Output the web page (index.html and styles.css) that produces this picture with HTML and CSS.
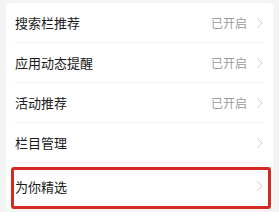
FILE: index.html
```html
<!DOCTYPE html>
<html lang="zh">
<head>
<meta charset="utf-8">
<link rel="stylesheet" href="styles.css">
</head>
<body>
<div class="card">
  <div class="row"><span class="label">搜索栏推荐</span><span class="value">已开启</span><svg class="chev" viewBox="0 0 7 12"><polyline points="1,1 6,6 1,11"/></svg></div>
  <div class="row"><span class="label">应用动态提醒</span><span class="value">已开启</span><svg class="chev" viewBox="0 0 7 12"><polyline points="1,1 6,6 1,11"/></svg></div>
  <div class="row"><span class="label">活动推荐</span><span class="value">已开启</span><svg class="chev" viewBox="0 0 7 12"><polyline points="1,1 6,6 1,11"/></svg></div>
  <div class="row"><span class="label">栏目管理</span><svg class="chev" viewBox="0 0 7 12"><polyline points="1,1 6,6 1,11"/></svg></div>
  <div class="row last"><span class="label">为你精选</span><svg class="chev" viewBox="0 0 7 12"><polyline points="1,1 6,6 1,11"/></svg>
    <div class="highlight"></div>
  </div>
</div>
</body>
</html>
```
FILE: styles.css
```css
html, body {
  margin: 0;
  padding: 0;
  background: #f4f4f4;
  font-family: "Noto Sans CJK SC", "Noto Sans", sans-serif;
}
body {
  padding: 3px 6px 0 6px;
  height: 212px;
  box-sizing: border-box;
  overflow: hidden;
}
.card {
  background: #ffffff;
  border-radius: 4px 4px 0 0;
  padding: 0 9px;
}
.row {
  position: relative;
  height: 40px;
  display: flex;
  align-items: center;
  border-bottom: 1px solid #f2f2f2;
  box-sizing: border-box;
}
.row.last {
  border-bottom: none;
  height: 46px;
}
.label {
  flex: 1;
  font-size: 13px;
  color: #1a1a1a;
}
.value {
  font-size: 12px;
  color: #9c9c9c;
  margin-right: 9px;
}
.chev {
  width: 7px;
  height: 12px;
  margin-right: 1px;
  fill: none;
  stroke: #cfcfcf;
  stroke-width: 1;
}
.highlight {
  position: absolute;
  left: -4px;
  right: -7px;
  top: 4px;
  height: 42px;
  border: 3px solid #d42a25;
  border-radius: 3px;
  box-sizing: border-box;
}
```
